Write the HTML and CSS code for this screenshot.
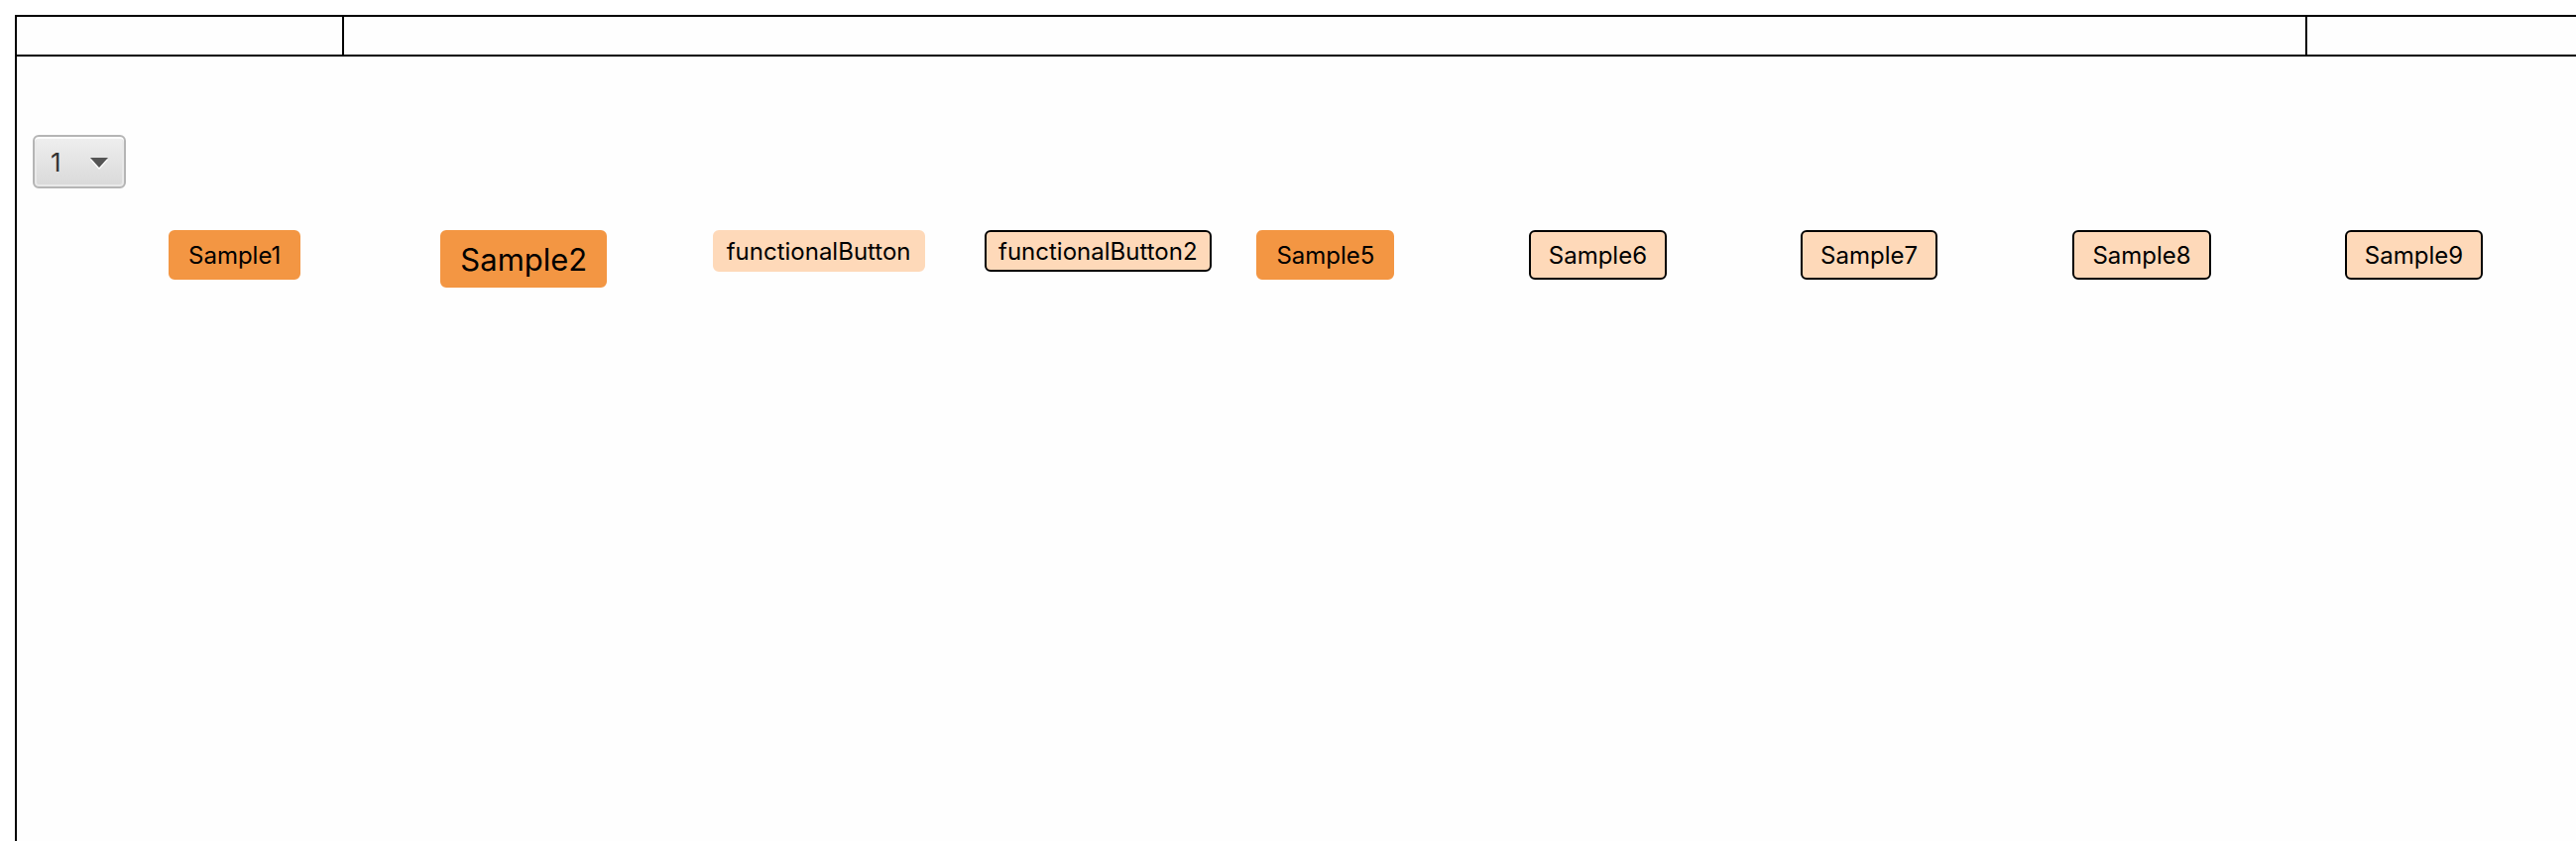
FILE: index.html
```html
<!DOCTYPE html>
<html lang="en">
<head>
<meta charset="utf-8">
<meta name="viewport" content="width=device-width, initial-scale=1">
<title>Button samples</title>
<link rel="stylesheet" href="styles.css">
</head>
<body>
<div class="frame">
  <header class="header">
    <div class="header-cell"></div>
    <div class="header-cell"></div>
    <div class="header-cell"></div>
  </header>
  <main class="content">
    <div class="picker">
      <select class="picker-select" aria-label="Number">
        <option>1</option>
        <option>2</option>
        <option>3</option>
      </select>
      <svg class="picker-arrow" viewBox="0 0 18 12" aria-hidden="true">
        <path d="M0 2H18L9 12Z" fill="#fff"/>
        <path d="M0 0H18L9 10Z" fill="#555"/>
      </svg>
    </div>
    <div class="samples">
      <button class="button" type="button">Sample1</button>
      <button class="button button-large" type="button">Sample2</button>
      <button class="button button-light button-compact" type="button">functionalButton</button>
      <button class="button button-light button-compact button-outlined" type="button">functionalButton2</button>
      <button class="button" type="button">Sample5</button>
      <button class="button button-light button-outlined" type="button">Sample6</button>
      <button class="button button-light button-outlined" type="button">Sample7</button>
      <button class="button button-light button-outlined" type="button">Sample8</button>
      <button class="button button-light button-outlined" type="button">Sample9</button>
    </div>
  </main>
</div>
</body>
</html>
```

FILE: styles.css
```css
* {
  box-sizing: border-box;
}

body {
  margin: 0;
  padding: 15px 0 0 15px;
  min-height: 100vh;
  display: flex;
  flex-direction: column;
  background: #fff;
  color: #000;
  font-family: Inter, "Liberation Sans", sans-serif;
  font-size: 24px;
}

.frame {
  flex: 1;
  border: solid #000;
  border-width: 2px 0 0 2px;
  background: #fefefe;
}

.header {
  display: grid;
  grid-template-columns: 330fr 1980fr 271fr;
  height: 40px;
  border-bottom: 2px solid #000;
}

.header-cell {
  border-right: 2px solid #000;
}

.header-cell:last-child {
  border-right: 0;
}

.content {
  padding: 79px 0 0 16px;
}

.picker {
  display: inline-grid;
  grid-template-columns: 94px;
  align-items: center;
  vertical-align: top;
}

.picker-select {
  grid-area: 1 / 1;
  height: 54px;
  padding: 0 0 0 16px;
  appearance: none;
  border: 2px solid #b5b5b5;
  border-radius: 6px;
  background: linear-gradient(#efefef, #d9d9d9);
  box-shadow: inset 0 2px #fcfcfc, inset 0 0 0 2px #e9e9e9;
  color: #333;
  font: inherit;
  font-size: 26px;
}

.picker-arrow {
  grid-area: 1 / 1;
  justify-self: end;
  width: 18px;
  height: 12px;
  margin: 4px 18px 0 0;
  pointer-events: none;
}

.samples {
  display: grid;
  grid-template-columns: repeat(8, 20fr) 17fr;
  align-items: start;
  justify-items: start;
  padding: 42px 0 0 137px;
}

.button {
  padding: 9px 18px 7px;
  border: 2px solid #f39643;
  border-radius: 6px;
  background: #f39643;
  color: #000;
  font: inherit;
  line-height: 30px;
  white-space: nowrap;
}

.button-large {
  font-size: 31px;
  line-height: 38px;
}

.button-light {
  border-color: #fed9b9;
  background: #fed9b9;
}

.button-compact {
  padding: 5px 12px 3px;
}

.button-outlined {
  border-color: #000;
}
```
